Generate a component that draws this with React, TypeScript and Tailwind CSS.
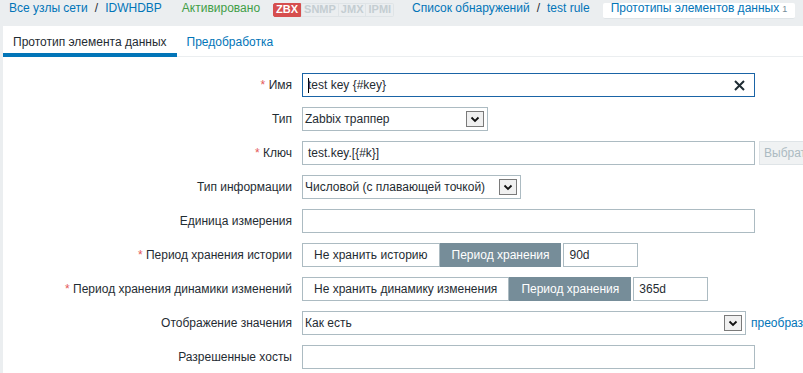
import React from "react";

function Chevron() {
  return (
    <svg width="10" height="7" viewBox="0 0 10 7" className="block">
      <path d="M1.5 1.5 L5 5 L8.5 1.5" fill="none" stroke="#111" strokeWidth="1.8" />
    </svg>
  );
}

function Select({ w, text }: { w: string; text: string }) {
  return (
    <div className={`${w} h-[24px] border border-[#acbbc2] bg-white flex items-center justify-between pl-[2px] pr-[3px]`}>
      <span className="leading-[14px]">{text}</span>
      <span className="w-[18px] h-[16px] border border-[#7a7a7a] bg-[#f0f0f0] flex items-center justify-center">
        <Chevron />
      </span>
    </div>
  );
}

function Row({ label, req, children }: { label: string; req?: boolean; children: React.ReactNode }) {
  return (
    <div className="flex items-center h-[24px] whitespace-nowrap">
      <div className="w-[289px] shrink-0 text-right leading-[14px]">
        {req && <span className="text-[#e45959]">* </span>}
        {label}
      </div>
      <div className="ml-[10px] flex items-center">{children}</div>
    </div>
  );
}

function Input({ w, text }: { w: string; text?: string }) {
  return (
    <div className={`${w} h-[24px] border border-[#acbbc2] bg-white flex items-center px-[5px]`}>
      <span className="leading-[14px]">{text}</span>
    </div>
  );
}

export default function App() {
  return (
    <div className="w-[803px] h-[373px] overflow-hidden bg-[#ebeef0] text-[12px] text-[#1f2c33] font-['Liberation_Sans',Arial,sans-serif] flex flex-col">
      {/* Top bar */}
      <div className="h-[26px] shrink-0 flex items-start whitespace-nowrap pl-[9px]">
        <span className="mt-[2px] leading-[13px] text-[#0275b8]">Все узлы сети</span>
        <span className="mt-[2px] leading-[13px] mx-[7px]">/</span>
        <span className="mt-[2px] leading-[13px] text-[#0275b8]">IDWHDBP</span>
        <span className="mt-[2px] leading-[13px] ml-[20px] text-[#429e47]">Активировано</span>
        <div className="ml-[13px] mt-[3px] flex font-bold text-[11px]">
          <span className="h-[14px] leading-[10px] px-[2px] border border-[#d64e4e] bg-[#d64e4e] text-white rounded-l-[2px]">ZBX</span>
          <span className="h-[14px] leading-[10px] px-[2px] border border-[#dfe4e7] text-[#c4cdd2]">SNMP</span>
          <span className="h-[14px] leading-[10px] px-[2px] border border-l-0 border-[#dfe4e7] text-[#c4cdd2]">JMX</span>
          <span className="h-[14px] leading-[10px] px-[2px] border border-l-0 border-[#dfe4e7] text-[#c4cdd2] rounded-r-[2px]">IPMI</span>
        </div>
        <span className="mt-[2px] leading-[13px] ml-[18px] text-[#0275b8]">Список обнаружений</span>
        <span className="mt-[2px] leading-[13px] mx-[7px]">/</span>
        <span className="mt-[2px] leading-[13px] text-[#0275b8]">test rule</span>
        <div className="ml-[13px] mt-[3px] h-[16px] px-[8px] bg-white rounded-[2px] border-b border-[#dfe4e7] leading-[11px] flex items-start">
          <span className="text-[#0275b8]">Прототипы элементов данных</span>
          <span className="ml-[3px] text-[9px] text-[#768d99] leading-[11px] mt-[1px]">1</span>
        </div>
      </div>

      {/* Panel */}
      <div className="ml-[3px] flex-1 bg-white">
        <div className="flex h-[31px] border-b border-[#ebeef0] whitespace-nowrap">
          <div className="h-[31px] px-[10px] pt-[9px] leading-[14px] border-b-4 border-[#0275b8]">Прототип элемента данных</div>
          <div className="h-[31px] px-[10px] pt-[9px] leading-[14px] text-[#0275b8]">Предобработка</div>
        </div>

        <div className="pt-[16px] flex flex-col gap-[10px]">
          <Row label="Имя" req>
            <div className="w-[453px] h-[24px] border border-[#1a64a6] bg-white flex items-center pl-[5px] pr-[9px]">
              <span className="inline-block w-px h-[15px] bg-black -mr-px" />
              <span className="flex-1 leading-[14px]">test key {"{#key}"}</span>
              <svg width="11" height="11" viewBox="0 0 11 11" className="block">
                <path d="M1 1 L10 10 M10 1 L1 10" stroke="#1f2c33" strokeWidth="2" />
              </svg>
            </div>
          </Row>
          <Row label="Тип">
            <Select w="w-[186px]" text="Zabbix траппер" />
          </Row>
          <Row label="Ключ" req>
            <Input w="w-[453px]" text="test.key.[{#k}]" />
            <div className="ml-[4px] h-[24px] px-[4px] border border-[#dfe4e7] bg-[#f0f2f3] text-[#acbbc2] flex items-center leading-[14px]">
              Выбрать
            </div>
          </Row>
          <Row label="Тип информации">
            <Select w="w-[219px]" text="Числовой (с плавающей точкой)" />
          </Row>
          <Row label="Единица измерения">
            <Input w="w-[453px]" />
          </Row>
          <Row label="Период хранения истории" req>
            <div className="flex">
              <span className="h-[24px] px-[11px] border border-[#acbbc2] bg-white flex items-center leading-[14px]">Не хранить историю</span>
              <span className="h-[24px] px-[11px] border border-[#768d99] bg-[#768d99] text-white flex items-center leading-[14px]">Период хранения</span>
            </div>
            <div className="ml-[2px]">
              <Input w="w-[75px]" text="90d" />
            </div>
          </Row>
          <Row label="Период хранения динамики изменений" req>
            <div className="flex">
              <span className="h-[24px] px-[11px] border border-[#acbbc2] bg-white flex items-center leading-[14px]">Не хранить динамику изменения</span>
              <span className="h-[24px] px-[11px] border border-[#768d99] bg-[#768d99] text-white flex items-center leading-[14px]">Период хранения</span>
            </div>
            <div className="ml-[2px]">
              <Input w="w-[75px]" text="365d" />
            </div>
          </Row>
          <Row label="Отображение значения">
            <Select w="w-[444px]" text="Как есть" />
            <span className="ml-[5px] text-[#0275b8] leading-[14px]">преобразования значений</span>
          </Row>
          <Row label="Разрешенные хосты">
            <Input w="w-[453px]" />
          </Row>
        </div>
      </div>
    </div>
  );
}
